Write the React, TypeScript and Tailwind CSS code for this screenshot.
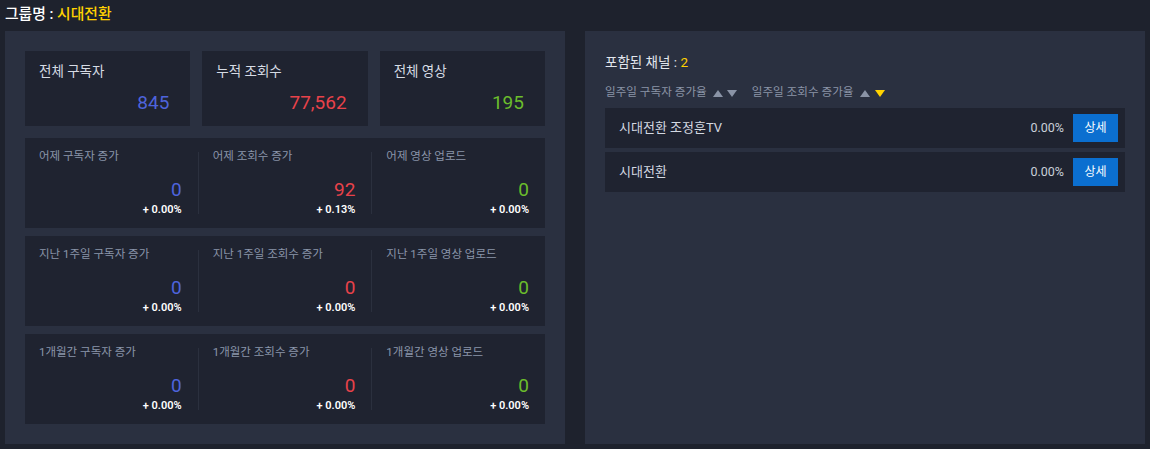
import React from "react";

const FONT = { fontFamily: '"Roboto", "Noto Sans CJK KR", sans-serif' };

type Cell = { label: string; value: string; pct: string; color: string };

const BLUE = "text-[#4e63dc]";
const RED = "text-[#e8424a]";
const GREEN = "text-[#6bbd2c]";

const blocks: Cell[][] = [
  [
    { label: "어제 구독자 증가", value: "0", pct: "+ 0.00%", color: BLUE },
    { label: "어제 조회수 증가", value: "92", pct: "+ 0.13%", color: RED },
    { label: "어제 영상 업로드", value: "0", pct: "+ 0.00%", color: GREEN },
  ],
  [
    { label: "지난 1주일 구독자 증가", value: "0", pct: "+ 0.00%", color: BLUE },
    { label: "지난 1주일 조회수 증가", value: "0", pct: "+ 0.00%", color: RED },
    { label: "지난 1주일 영상 업로드", value: "0", pct: "+ 0.00%", color: GREEN },
  ],
  [
    { label: "1개월간 구독자 증가", value: "0", pct: "+ 0.00%", color: BLUE },
    { label: "1개월간 조회수 증가", value: "0", pct: "+ 0.00%", color: RED },
    { label: "1개월간 영상 업로드", value: "0", pct: "+ 0.00%", color: GREEN },
  ],
];

function Up({ color }: { color: string }) {
  return (
    <svg width="10" height="7" viewBox="0 0 10 7">
      <polygon points="5,0 10,7 0,7" fill={color} />
    </svg>
  );
}
function Down({ color }: { color: string }) {
  return (
    <svg width="10" height="7" viewBox="0 0 10 7">
      <polygon points="0,0 10,0 5,7" fill={color} />
    </svg>
  );
}

function TopCard({ title, value, color }: { title: string; value: string; color: string }) {
  return (
    <div className="flex-1 bg-[#1f2330] pl-[14px] pr-[21px] pt-[10px] pb-[11px] flex flex-col">
      <div className="text-[13.5px] leading-[20px] text-[#d6dbe4]">{title}</div>
      <div className={`mt-[10px] text-right text-[19px] leading-[24px] ${color}`}>{value}</div>
    </div>
  );
}

function StatBlock({ cells }: { cells: Cell[] }) {
  return (
    <div className="h-[90px] bg-[#1f2330] flex py-[9px]">
      {cells.map((c, i) => (
        <React.Fragment key={i}>
          {i > 0 && <div className="w-px bg-[#2b303e] my-[5px]" />}
          <div className="flex-1 pl-[14px] pr-[16px] flex flex-col">
            <div className="text-[11.5px] leading-[18px] text-[#8a95aa]">{c.label}</div>
            <div className={`mt-[13px] text-right text-[19px] leading-[24px] ${c.color}`}>{c.value}</div>
            <div className="text-right text-[11px] leading-[15px] font-semibold text-white">{c.pct}</div>
          </div>
        </React.Fragment>
      ))}
    </div>
  );
}

function ChannelRow({ name }: { name: string }) {
  return (
    <div className="h-[40px] bg-[#1f2330] flex items-center pl-[14px] pr-[7px]">
      <div className="flex-1 text-[13px] text-[#d3d8e1]">{name}</div>
      <div className="text-[12.5px] text-[#c9cfd9] mr-[9px]">0.00%</div>
      <button className="w-[45px] h-[28px] bg-[#0b6fd0] text-white text-[12px] flex items-center justify-center">
        상세
      </button>
    </div>
  );
}

export default function App() {
  return (
    <div className="w-[1150px] h-[449px] bg-[#1e222d] px-[5px]" style={FONT}>
      <div className="h-[31px] pt-[4px] text-[14.8px] leading-[20px] font-medium">
        <span className="text-white">그룹명 : </span>
        <span className="text-[#ffd200]">시대전환</span>
      </div>
      <div className="flex gap-[20px]">
        <div className="w-[560px] h-[413px] bg-[#2a3040] p-[20px] flex flex-col">
          <div className="flex gap-[12px] h-[75px]">
            <TopCard title="전체 구독자" value="845" color={BLUE} />
            <TopCard title="누적 조회수" value="77,562" color={RED} />
            <TopCard title="전체 영상" value="195" color={GREEN} />
          </div>
          <div className="mt-[12px] flex flex-col gap-[8px]">
            {blocks.map((b, i) => (
              <StatBlock key={i} cells={b} />
            ))}
          </div>
        </div>
        <div className="w-[560px] h-[413px] bg-[#2a3040] px-[20px] pt-[21px]">
          <div className="text-[13.5px] leading-[20px] text-[#e3e7ee]">
            포함된 채널 : <span className="text-[#ffd200]">2</span>
          </div>
          <div className="mt-[12px] h-[18px] flex items-center text-[11.6px] text-[#8a94a7]">
            <span>일주일 구독자 증가율</span>
            <span className="ml-[6px] flex items-center gap-[4px]">
              <Up color="#8a93a6" />
              <Down color="#8a93a6" />
            </span>
            <span className="ml-[15px]">일주일 조회수 증가율</span>
            <span className="ml-[6px] flex items-center gap-[5px]">
              <Up color="#8a93a6" />
              <Down color="#ffd200" />
            </span>
          </div>
          <div className="mt-[6px] flex flex-col gap-[4px]">
            <ChannelRow name="시대전환 조정훈TV" />
            <ChannelRow name="시대전환" />
          </div>
        </div>
      </div>
    </div>
  );
}
